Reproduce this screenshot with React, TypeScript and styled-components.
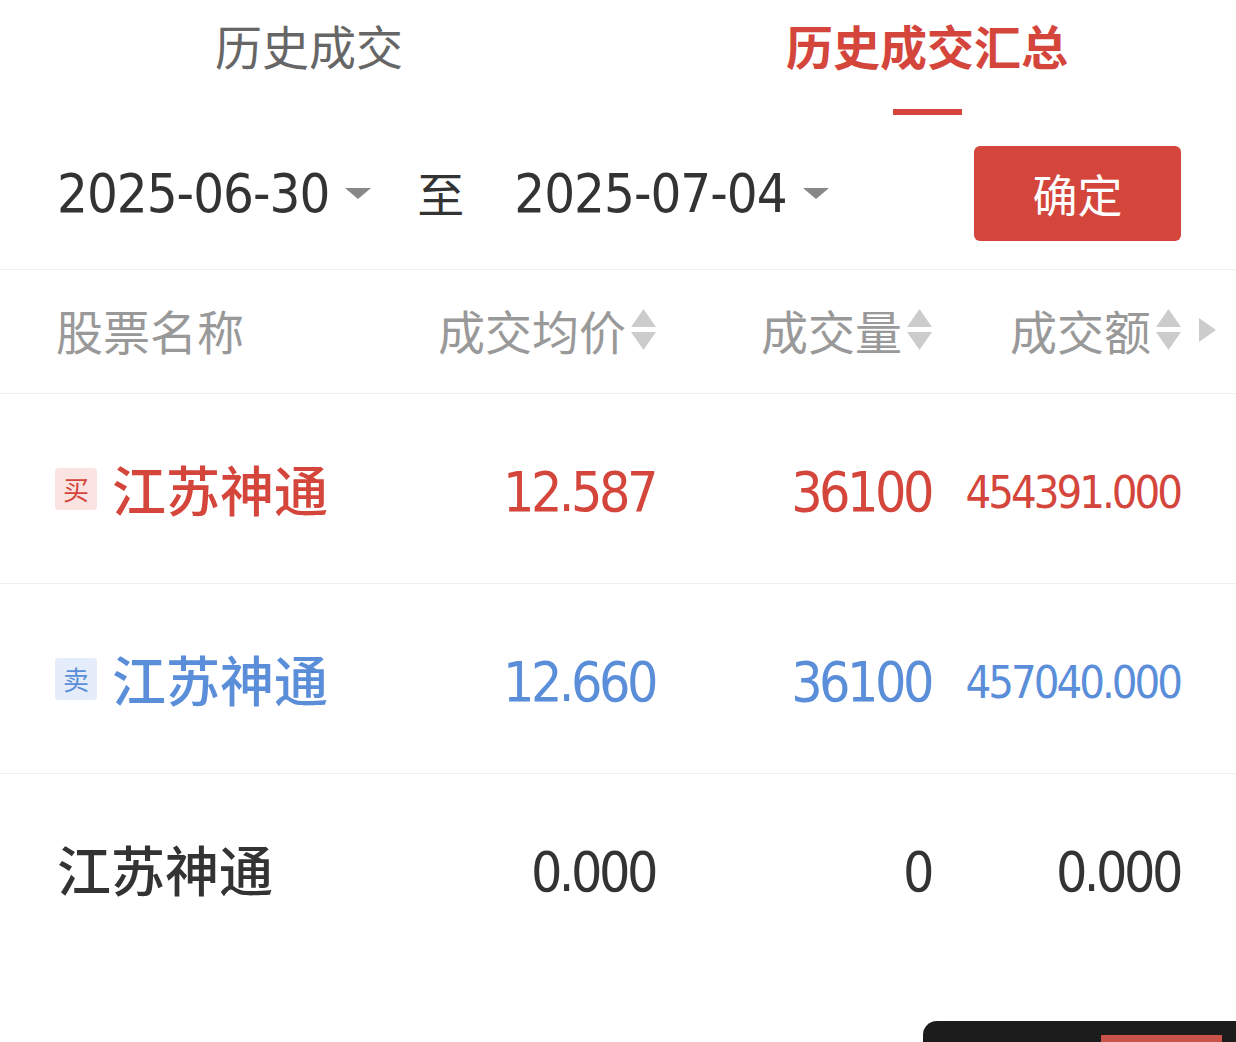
import React from 'react';
import styled, { createGlobalStyle } from 'styled-components';

const GlobalStyle = createGlobalStyle`
  html, body { margin: 0; padding: 0; background: #fff; }
  body {
    font-family: "Noto Sans CJK SC", "Noto Sans", sans-serif;
    overflow: hidden;
  }
`;

const NUM = `"DejaVu Sans Condensed", "DejaVu Sans", sans-serif`;
const RED = '#d4453b';
const BLUE = '#5b8ed9';

const Page = styled.div`
  position: relative;
  width: 1236px;
  height: 1042px;
  overflow: hidden;
  background: #fff;
`;

const Tabs = styled.div`
  display: grid;
  grid-template-columns: 1fr 1fr;
  height: 118px;
`;

const Tab = styled.div<{ $active?: boolean }>`
  display: flex;
  flex-direction: column;
  align-items: center;
  padding-top: 21px;
  font-size: 47px;
  line-height: 1;
  color: ${(p) => (p.$active ? RED : '#666')};
  font-weight: ${(p) => (p.$active ? 600 : 400)};
`;

const Underline = styled.div`
  margin-top: auto;
  margin-bottom: 3px;
  width: 69px;
  height: 6px;
  background: ${RED};
`;

const DateRow = styled.div`
  display: flex;
  align-items: center;
  height: 151px;
  padding: 0 55px 0 57px;
  border-bottom: 1px solid #eeeeee;
`;

const DateSelect = styled.div`
  display: flex;
  align-items: center;
  font-family: ${NUM};
  font-size: 54px;
  letter-spacing: -1px;
  color: #333;
`;

const Caret = styled.span`
  display: inline-block;
  margin-left: 16px;
  width: 0;
  height: 0;
  border-left: 13px solid transparent;
  border-right: 13px solid transparent;
  border-top: 11px solid #888;
`;

const To = styled.span`
  margin: 0 50px 4px 46px;
  font-size: 47px;
  line-height: 1;
  color: #333;
`;

const Confirm = styled.button`
  margin-left: auto;
  width: 207px;
  height: 95px;
  border: none;
  border-radius: 6px;
  background: ${RED};
  color: #fff;
  font-family: "Noto Sans CJK SC", sans-serif;
  font-size: 45px;
  padding: 0;
`;

const COLS = '383px 215px 276px 249px';

const HeaderRow = styled.div`
  display: grid;
  grid-template-columns: ${COLS} 1fr;
  align-items: center;
  height: 124px;
  padding-left: 56px;
  padding-bottom: 4px;
  box-sizing: border-box;
  border-bottom: 1px solid #eeeeee;
  color: #999;
  font-size: 47px;
`;

const HeadCell = styled.div<{ $right?: boolean }>`
  display: flex;
  align-items: center;
  justify-content: ${(p) => (p.$right ? 'flex-end' : 'flex-start')};
  white-space: nowrap;
  line-height: 1;
  min-width: 0;
`;

const SortIcon = styled.svg`
  flex: none;
  margin-left: 5px;
  margin-right: -2px;
  width: 25px;
  height: 42px;
`;

const MoreArrow = styled.div`
  margin-left: 20px;
  width: 0;
  height: 0;
  border-top: 12px solid transparent;
  border-bottom: 12px solid transparent;
  border-left: 17px solid #ccc;
`;

const Row = styled.div<{ $last?: boolean }>`
  display: grid;
  grid-template-columns: ${COLS};
  align-items: center;
  height: 190px;
  padding-left: 57px;
  box-sizing: border-box;
  border-bottom: ${(p) => (p.$last ? 'none' : '1px solid #eeeeee')};
`;

const NameCell = styled.div`
  display: flex;
  align-items: center;
`;

const Badge = styled.span<{ $side: 'buy' | 'sell' }>`
  display: inline-flex;
  align-items: center;
  justify-content: center;
  width: 42px;
  height: 42px;
  margin-left: -2px;
  margin-right: 15px;
  border-radius: 4px;
  font-size: 26px;
  line-height: 1;
  background: ${(p) => (p.$side === 'buy' ? '#fbe3e1' : '#e5edfa')};
  color: ${(p) => (p.$side === 'buy' ? RED : BLUE)};
`;

const Name = styled.span<{ $color: string }>`
  font-size: 54px;
  line-height: 1;
  font-weight: 500;
  color: ${(p) => p.$color};
`;

const Num = styled.div<{ $color: string; $small?: boolean }>`
  text-align: right;
  font-family: ${NUM};
  font-size: ${(p) => (p.$small ? '45px' : '55px')};
  letter-spacing: ${(p) => (p.$small ? '-3px' : '-3.5px')};
  padding-top: 7px;
  line-height: 1;
  color: ${(p) => p.$color};
`;

const FloatBar = styled.div`
  position: absolute;
  left: 923px;
  right: 0;
  top: 1021px;
  height: 80px;
  background: #1c1c1c;
  border-top-left-radius: 14px;
`;

const FloatBarAccent = styled.div`
  position: absolute;
  left: 178px;
  top: 14px;
  width: 121px;
  height: 60px;
  background: #c9524a;
`;

const Sort = () => (
  <SortIcon viewBox="0 0 25 42">
    <polygon points="12.5,0 25,18 0,18" fill="#ccc" />
    <polygon points="0,23 25,23 12.5,41" fill="#ccc" />
  </SortIcon>
);

type Trade = {
  side?: 'buy' | 'sell';
  price: string;
  vol: string;
  amount: string;
};

const trades: Trade[] = [
  { side: 'buy', price: '12.587', vol: '36100', amount: '454391.000' },
  { side: 'sell', price: '12.660', vol: '36100', amount: '457040.000' },
  { price: '0.000', vol: '0', amount: '0.000' },
];

export default function App() {
  return (
    <Page>
      <GlobalStyle />
      <Tabs>
        <Tab>历史成交</Tab>
        <Tab $active>
          历史成交汇总
          <Underline />
        </Tab>
      </Tabs>
      <DateRow>
        <DateSelect>
          2025-06-30
          <Caret />
        </DateSelect>
        <To>至</To>
        <DateSelect>
          2025-07-04
          <Caret />
        </DateSelect>
        <Confirm>确定</Confirm>
      </DateRow>
      <HeaderRow>
        <HeadCell>股票名称</HeadCell>
        <HeadCell $right>
          成交均价
          <Sort />
        </HeadCell>
        <HeadCell $right>
          成交量
          <Sort />
        </HeadCell>
        <HeadCell $right>
          成交额
          <Sort />
        </HeadCell>
        <HeadCell>
          <MoreArrow />
        </HeadCell>
      </HeaderRow>
      {trades.map((t, i) => {
        const color = t.side === 'buy' ? RED : t.side === 'sell' ? BLUE : '#333';
        return (
          <Row key={i} $last={i === trades.length - 1}>
            <NameCell>
              {t.side && <Badge $side={t.side}>{t.side === 'buy' ? '买' : '卖'}</Badge>}
              <Name $color={color}>江苏神通</Name>
            </NameCell>
            <Num $color={color}>{t.price}</Num>
            <Num $color={color}>{t.vol}</Num>
            <Num $color={color} $small={t.amount.length > 7}>
              {t.amount}
            </Num>
          </Row>
        );
      })}
      <FloatBar>
        <FloatBarAccent />
      </FloatBar>
    </Page>
  );
}
